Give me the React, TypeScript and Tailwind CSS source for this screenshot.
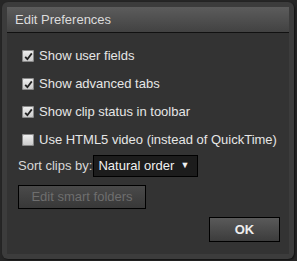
import { useState } from 'react'

const ROWS = [
  { label: 'Show user fields', checked: true },
  { label: 'Show advanced tabs', checked: true },
  { label: 'Show clip status in toolbar', checked: true },
  { label: 'Use HTML5 video (instead of QuickTime)', checked: false },
]

export default function App() {
  const [prefs, setPrefs] = useState(ROWS.map((r) => r.checked))

  return (
    <div className="h-[261px] w-[297px] bg-[#262626] pl-[2px] pt-[2px] font-['Liberation_Sans',Arial,sans-serif]">
      <div className="flex h-[257px] w-[292px] flex-col rounded-[6px] bg-[#3c3c3c] p-[5px] shadow-[1px_1px_2px_rgba(0,0,0,0.6)]">
        <div className="flex h-[26px] shrink-0 items-center border-b border-[#111] bg-gradient-to-b from-[#5c5c5c] to-[#424242] pl-[8px] text-[13px] text-[#dcdcdc]">
          Edit Preferences
        </div>
        <div className="flex flex-1 flex-col bg-[#333] pl-[15px] pr-[9px] pt-[9px] text-[13px] text-[#e6e6e6]">
          {ROWS.map((r, i) => (
            <label key={r.label} className="flex h-[28px] items-center gap-[5px]">
              <Checkbox
                checked={prefs[i]}
                onChange={() => setPrefs((p) => p.map((v, j) => (j === i ? !v : v)))}
              />
              <span>{r.label}</span>
            </label>
          ))}
          <div className="-ml-[4px] mt-[1px] flex items-center">
            <span className="text-[#d8d8d8]">Sort clips by:</span>
            <div className="ml-[1px] flex h-[22px] w-[105px] items-center justify-between border border-black bg-[#1c1c1c] pl-[4px] pr-[8px] text-[#f0f0f0]">
              <span>Natural order</span>
              <span className="text-[9px]">▼</span>
            </div>
          </div>
          <button
            type="button"
            disabled
            className="-ml-[4px] mt-[8px] h-[24px] w-[128px] border border-black bg-gradient-to-b from-[#4a4a4a] to-[#383838] text-[13px] text-[#6e6e6e]"
          >
            Edit smart folders
          </button>
          <div className="mt-[8px] flex justify-end">
            <button
              type="button"
              className="h-[25px] w-[71px] border border-black bg-gradient-to-b from-[#5a5a5a] to-[#3c3c3c] text-[13px] font-bold text-[#eee]"
            >
              OK
            </button>
          </div>
        </div>
      </div>
    </div>
  )
}

function Checkbox({ checked, onChange }: { checked: boolean; onChange: () => void }) {
  return (
    <span
      onClick={onChange}
      className="flex h-[12px] w-[12px] items-center justify-center rounded-[2px] bg-gradient-to-b from-[#f2f2f2] to-[#c8c8c8] shadow-[inset_0_0_0_1px_#888]"
    >
      {checked && (
        <svg width="9" height="9" viewBox="0 0 9 9">
          <path d="M1.2 4.8 L3.4 7.2 L7.8 1.4" fill="none" stroke="#222" strokeWidth="1.8" />
        </svg>
      )}
    </span>
  )
}
